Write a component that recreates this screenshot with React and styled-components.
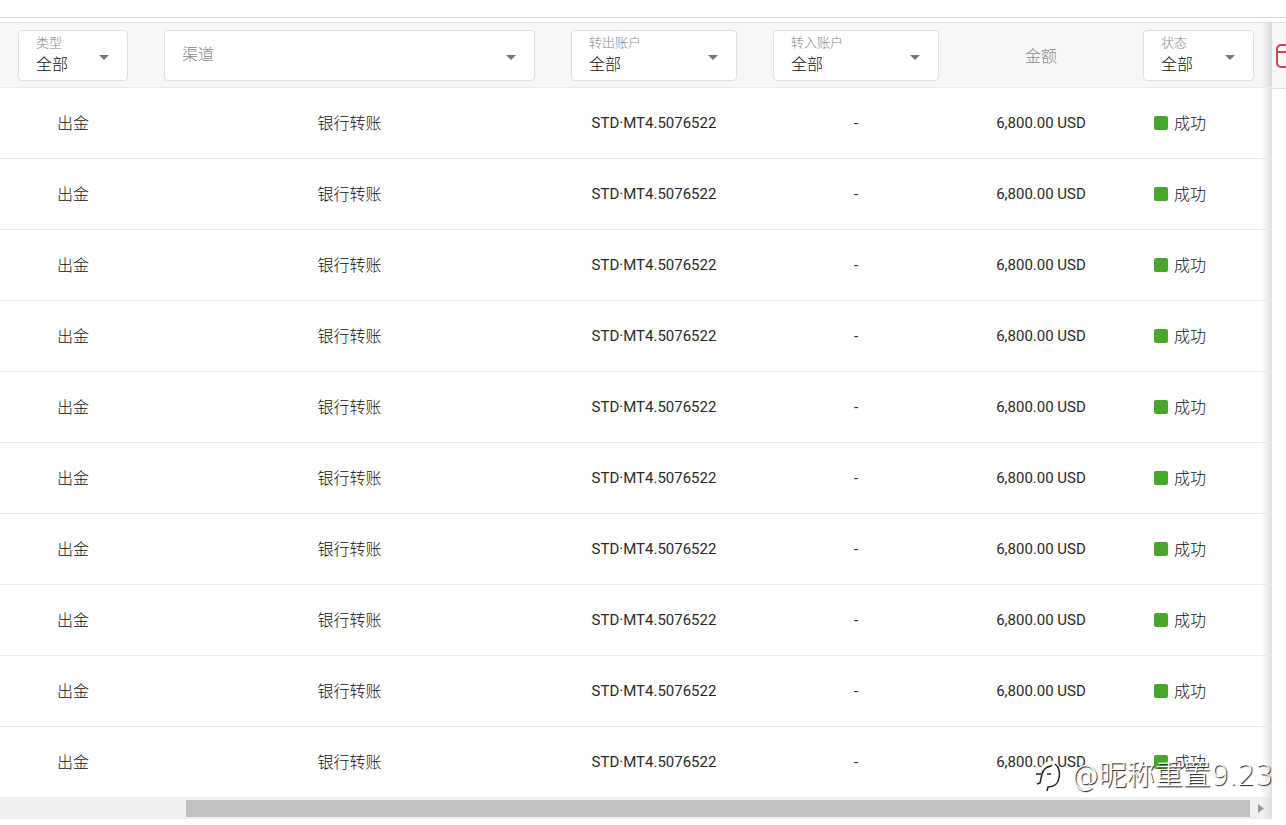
import React from "react"
import styled, { createGlobalStyle } from "styled-components"

const GlobalStyle = createGlobalStyle`
  * {
    box-sizing: border-box;
  }
  body {
    margin: 0;
    background: #fff;
    color: #111;
    font-family: Roboto, "Noto Sans CJK SC", sans-serif;
    font-size: 16px;
    font-weight: 300;
    overflow: hidden;
  }
`

const Page = styled.main`
  position: relative;
  padding-top: 17px;
`

const Divider = styled.div`
  height: 5px;
  border-top: 1px solid #d6d6d6;
`

const TableFrame = styled.section`
  display: flex;
`

const ScrollArea = styled.div`
  flex: 1;
  min-width: 0;
`

const Table = styled.table`
  width: 100%;
  border-collapse: separate;
  border-spacing: 0;
  table-layout: fixed;
  background: linear-gradient(to left, rgba(0, 0, 0, 0.12), transparent 10px);
`

const HeadCell = styled.th`
  width: ${p => p.$width || "auto"};
  height: 66px;
  padding: 0 18px;
  border-top: 1px solid #e2e2e2;
  border-bottom: 1px solid #ebebeb;
  background: rgba(0, 0, 0, 0.03);
  color: #888;
  font-weight: 300;
`

const Cell = styled.td`
  height: 71px;
  padding: 0 18px 2px;
  border-bottom: 1px solid #ebebeb;
  text-align: center;

  tr:last-child > & {
    height: 70px;
    border-bottom: 0;
  }
`

const Latin = styled.span`
  color: #2a2a2a;
  font-size: 15px;
  font-weight: 400;
`

const Status = styled.span`
  display: flex;
  align-items: center;
  gap: 6px;
  padding-left: 11px;

  &::before {
    content: "";
    width: 14px;
    height: 14px;
    margin-top: 2px;
    border-radius: 2px;
    background: #46a72b;
  }
`

const Field = styled.div`
  display: grid;
  grid-template-columns: 1fr 10px;
  grid-template-rows: 20px 24px;
  height: 51px;
  padding: 2px 18px 3px 17px;
  border: 1px solid #e0e0e0;
  border-radius: 4px;
  background: #fff;
  text-align: left;
`

const FieldLabel = styled.label`
  grid-column: 1;
  grid-row: ${p => (p.$empty ? "1 / 3" : "1")};
  align-self: center;
  color: #888;
  font-size: ${p => (p.$empty ? "16px" : "13px")};
  line-height: 20px;
  white-space: nowrap;
`

const Select = styled.select`
  grid-column: 1;
  grid-row: ${p => (p.$empty ? "1 / 3" : "2")};
  width: 100%;
  padding: 0;
  border: 0;
  outline: 0;
  appearance: none;
  background: transparent;
  color: #111;
  font: inherit;
  line-height: 24px;
`

const Caret = styled.svg`
  grid-column: 2;
  grid-row: 1 / 3;
  align-self: center;
  width: 10px;
  height: 5px;
  margin-top: 6px;
  fill: #777;
`

const Pinned = styled.aside`
  flex: none;
  width: 14px;
  overflow: hidden;
  background: #fff;
`

const PinnedHead = styled.div`
  display: flex;
  align-items: center;
  height: 67px;
  padding-left: 4px;
  border-top: 1px solid #e2e2e2;
  border-bottom: 1px solid #e2e2e2;
  background: #f7f7f7;
`

const IconButton = styled.button`
  display: flex;
  padding: 0;
  border: 0;
  background: none;
`

const ScrollTrack = styled.div`
  display: flex;
  align-items: center;
  height: 22px;
  background: linear-gradient(to left, rgba(0, 0, 0, 0.08), transparent 10px),
    #f0f0f0;
`

const ScrollThumb = styled.div`
  flex: 1;
  height: 17px;
  margin-left: 186px;
  background: #c1c1c1;
`

const ScrollEnd = styled.button`
  display: flex;
  align-items: center;
  justify-content: center;
  width: 22px;
  height: 22px;
  padding: 0;
  border: 0;
  background: none;
`

const Watermark = styled.div`
  position: absolute;
  right: 13px;
  bottom: 22px;
  display: flex;
  align-items: center;
  gap: 10px;
  color: #fff;
  font-family: "DejaVu Sans Light", "DejaVu Sans", "Noto Sans CJK SC",
    sans-serif;
  font-size: 28px;
  font-weight: 200;
  line-height: 42px;
  text-shadow: 1px 1px 1px #111;
`

const columns = [
  { id: "type", label: "类型", width: "146px", value: "全部" },
  { id: "channel", label: "渠道", value: "" },
  { id: "from", label: "转出账户", width: "202px", value: "全部" },
  { id: "to", label: "转入账户", width: "202px", value: "全部" },
  { id: "amount", label: "金额", width: "168px" },
  { id: "status", label: "状态", width: "147px", value: "全部" },
]

const rows = Array.from({ length: 10 }, (_, i) => ({
  id: i,
  type: "出金",
  channel: "银行转账",
  from: "STD·MT4.5076522",
  to: "-",
  amount: "6,800.00 USD",
  status: "成功",
}))

const FilterField = ({ id, label, value }) => (
  <Field>
    <FieldLabel htmlFor={id} $empty={!value}>
      {label}
    </FieldLabel>
    <Select id={id} defaultValue={value} $empty={!value}>
      <option value={value}>{value}</option>
    </Select>
    <Caret viewBox="0 0 10 5">
      <path d="M0 0h10L5 5z" />
    </Caret>
  </Field>
)

const WatermarkLogo = () => (
  <svg width="28" height="34" viewBox="0 0 28 34" fill="none">
    <g stroke="#fff" strokeWidth="4">
      <path d="M4 22c3-1 3-4 4-8 1-5 4-9 10-10M18 3c7 3 8 7 7 13-1 7-5 11-10 13" />
    </g>
    <g stroke="#222" strokeWidth="1.5">
      <path d="M4 25l3-1 2-9c1-4 4-7 9-8M3 15h5M14 15h4" />
      <path d="M22 5c5 4 5 9 4 14-1 6-5 9-11 9l-1 4" />
    </g>
  </svg>
)

const App = () => (
  <Page>
    <GlobalStyle />
    <Divider />
    <TableFrame>
      <ScrollArea>
        <Table>
          <thead>
            <tr>
              {columns.map(col => (
                <HeadCell key={col.id} $width={col.width}>
                  {col.value === undefined ? (
                    col.label
                  ) : (
                    <FilterField {...col} />
                  )}
                </HeadCell>
              ))}
            </tr>
          </thead>
          <tbody>
            {rows.map(row => (
              <tr key={row.id}>
                <Cell>{row.type}</Cell>
                <Cell>{row.channel}</Cell>
                <Cell>
                  <Latin>{row.from}</Latin>
                </Cell>
                <Cell>
                  <Latin>{row.to}</Latin>
                </Cell>
                <Cell>
                  <Latin>{row.amount}</Latin>
                </Cell>
                <Cell>
                  <Status>{row.status}</Status>
                </Cell>
              </tr>
            ))}
          </tbody>
        </Table>
        <ScrollTrack>
          <ScrollThumb />
          <ScrollEnd aria-label="scroll right">
            <svg width="6" height="9" viewBox="0 0 6 9" fill="#999">
              <path d="M0 0v9l6-4.5z" />
            </svg>
          </ScrollEnd>
        </ScrollTrack>
      </ScrollArea>
      <Pinned>
        <PinnedHead>
          <IconButton aria-label="calendar">
            <svg
              width="24"
              height="24"
              viewBox="0 0 24 24"
              fill="none"
              stroke="#c9484c"
              strokeWidth="2"
            >
              <rect x="1" y="1" width="22" height="22" rx="4" />
              <path d="M1 8h22" />
            </svg>
          </IconButton>
        </PinnedHead>
      </Pinned>
    </TableFrame>
    <Watermark>
      <WatermarkLogo />
      <span>@昵称重置9.23</span>
    </Watermark>
  </Page>
)

export default App
